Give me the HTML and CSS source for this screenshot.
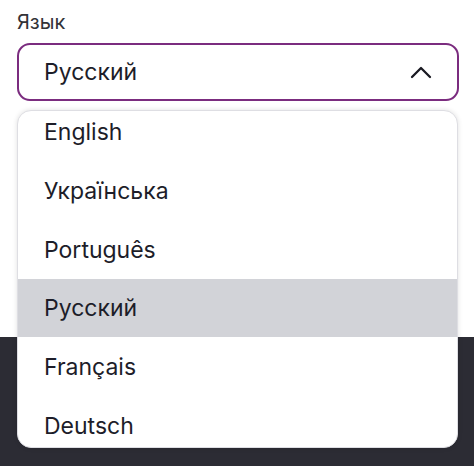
FILE: index.html
```html
<!DOCTYPE html>
<html lang="ru">
<head>
<meta charset="utf-8">
<link rel="stylesheet" href="styles.css">
</head>
<body>
<div class="page">
  <section class="top">
    <div class="field">
      <div class="label">Язык</div>
      <div class="select">
        <span class="value">Русский</span>
        <svg class="chevron" width="22" height="14" viewBox="0 0 22 14"><path d="M2 12 L11 3 L20 12" fill="none" stroke="#1a1a22" stroke-width="2.3" stroke-linecap="round" stroke-linejoin="round"/></svg>
      </div>
      <div class="menu">
        <ul class="list">
          <li class="item">English</li>
          <li class="item">Українська</li>
          <li class="item">Português</li>
          <li class="item active">Русский</li>
          <li class="item">Français</li>
          <li class="item">Deutsch</li>
        </ul>
      </div>
    </div>
  </section>
  <section class="bottom"></section>
</div>
</body>
</html>
```
FILE: styles.css
```css
* { box-sizing: border-box; }
html, body { margin: 0; padding: 0; }
body {
  font-family: Inter, "Noto Sans", "DejaVu Sans", sans-serif;
  background: #ffffff;
  color: #1d1d29;
}
.page { width: 474px; height: 466px; overflow: hidden; }
.top {
  height: 337px;
  background: #ffffff;
  padding: 10px 15px 0 17px;
}
.bottom {
  height: 129px;
  background: #2c2c34;
}
.field { position: relative; width: 442px; }
.label {
  font-size: 20px;
  line-height: 24px;
  color: #333338;
  margin-bottom: 9px;
}
.select {
  height: 58px;
  border: 2px solid #7b2c7f;
  border-radius: 13px;
  display: flex;
  align-items: center;
  justify-content: space-between;
  padding: 0 25px 0 25px;
}
.value { font-size: 23px; line-height: 26px; color: #1d1d29; }
.chevron { display: block; margin-top: 0; }
.menu {
  position: absolute;
  top: 100px;
  left: 0;
  width: 441px;
  height: 338px;
  background: #ffffff;
  border: 1px solid #dedee3;
  border-radius: 14px;
  box-shadow: 0 0 5px rgba(0, 0, 0, 0.12);
  overflow: hidden;
}
.list { list-style: none; margin: -9px 0 0 0; padding: 0; }
.item {
  height: 59px;
  display: flex;
  align-items: center;
  padding-left: 26px;
  font-size: 23px;
  color: #1d1d29;
}
.item.active { background: #d2d3d8; height: 58px; }
```
